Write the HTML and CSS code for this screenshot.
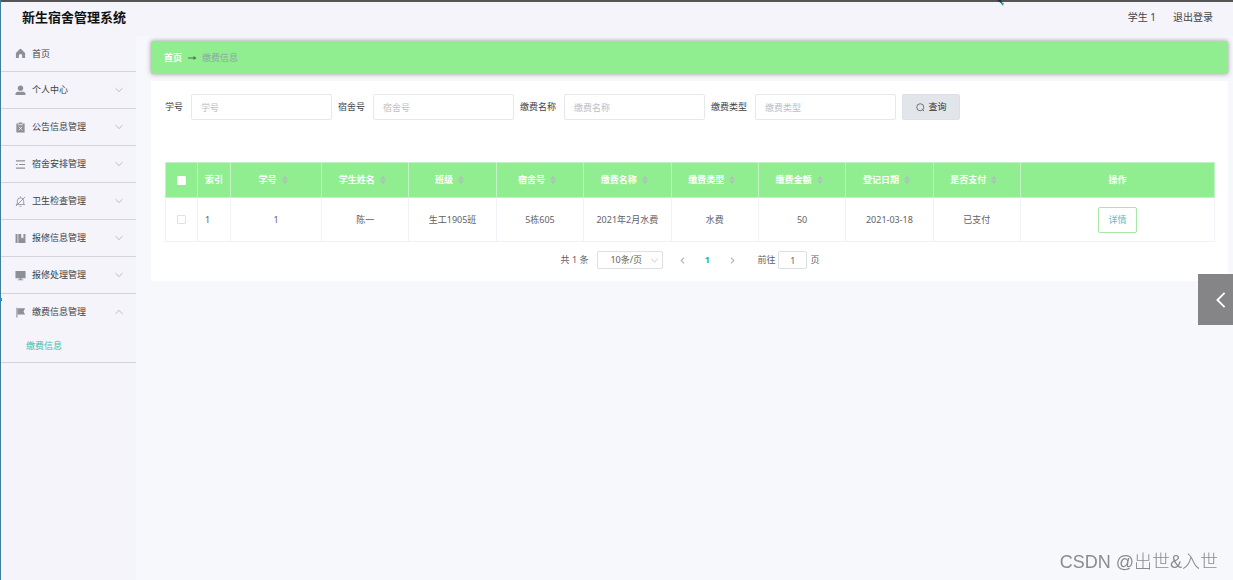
FILE: index.html
```html
<!DOCTYPE html>
<html lang="zh-CN">
<head>
<meta charset="utf-8">
<title>新生宿舍管理系统</title>
<link rel="stylesheet" href="styles.css">
</head>
<body>
<svg class="defs" aria-hidden="true">
  <symbol id="down" viewBox="0 0 10 10"><path d="M1.500 3.200 5 6.600 8.500 3.200" fill="none" stroke="currentColor"/></symbol>
  <symbol id="left" viewBox="0 0 10 10"><path d="M6.800 1.800 3.500 5l3.300 3.200" fill="none" stroke="currentColor" stroke-width="1.200"/></symbol>
  <symbol id="sort" viewBox="0 0 6 8"><path d="M3 0 6 3.600H0zM3 8 0 4.400h6z" fill="currentColor"/></symbol>
</svg>
<header class="header">
  <h1 class="title">新生宿舍管理系统</h1>
  <nav class="account"><a href="#">学生 1</a><a href="#">退出登录</a></nav>
  <svg class="cursor" viewBox="0 0 8 6"><path d="M0 0h4l2 5z" fill="#234"/><path d="M3 2l4 1-1 3z" fill="#2aa89a"/></svg>
</header>
<div class="layout">
  <aside class="sidebar">
    <ul class="menu">
      <li class="group"><a class="item" href="#"><svg class="icon" viewBox="0 0 12 12"><path d="M6 .8Q6.600.8 11 5.500V11H7.800V7.500Q6 5.800 4.200 7.500V11H1V5.500Q5.400.8 6 .8z" fill="currentColor"/></svg><span class="name">首页</span></a></li>
      <li class="group"><a class="item" href="#"><svg class="icon" viewBox="0 0 12 12"><circle cx="6" cy="3.500" r="2.900" fill="currentColor"/><path d="M.6 11V9.200Q1 7.300 3 7.300h6q2 0 2.400 1.900V11z" fill="currentColor"/></svg><span class="name">个人中心</span><svg class="arrow"><use href="#down"/></svg></a></li>
      <li class="group"><a class="item" href="#"><svg class="icon" viewBox="0 0 12 12"><path d="M1.500 1.500H4V.5h4v1h2.500v10h-9z" fill="currentColor"/><path d="M4 1.800V3h4V1.800M4 5l4 4M8 5 4 9" fill="none" stroke="#f5f4fa" stroke-width=".9"/></svg><span class="name">公告信息管理</span><svg class="arrow"><use href="#down"/></svg></a></li>
      <li class="group"><a class="item" href="#"><svg class="icon" viewBox="0 0 12 12"><path d="M1 2h10M4.500 6H11M1 10h10M1 6h2" fill="none" stroke="currentColor" stroke-width="1.300"/></svg><span class="name">宿舍安排管理</span><svg class="arrow"><use href="#down"/></svg></a></li>
      <li class="group"><a class="item" href="#"><svg class="icon" viewBox="0 0 12 12"><path d="M2.500 9V5.500Q2.500 2 6 2t3.500 3.500V9M1 9.300h10M6 .5V2M5 11.300h2M1 11 11 1" fill="none" stroke="currentColor" stroke-width=".9"/></svg><span class="name">卫生检查管理</span><svg class="arrow"><use href="#down"/></svg></a></li>
      <li class="group"><a class="item" href="#"><svg class="icon" viewBox="0 0 12 12"><path d="M.6 1h2.200v10H.6zM3.600 1h3.200v5L8 4.800 9.200 6V1h2.200v10H3.600z" fill="currentColor"/></svg><span class="name">报修信息管理</span><svg class="arrow"><use href="#down"/></svg></a></li>
      <li class="group"><a class="item" href="#"><svg class="icon" viewBox="0 0 12 12"><path d="M.5 1h11v8H7v1.300h2v1H3v-1h2V9H.5z" fill="currentColor"/></svg><span class="name">报修处理管理</span><svg class="arrow"><use href="#down"/></svg></a></li>
      <li class="group"><a class="item" href="#"><svg class="icon" viewBox="0 0 12 12"><path d="M1.500.8h1.200v10.700H1.500zM3 1.300h8L9.300 4.800 11 8.300H3z" fill="currentColor"/></svg><span class="name">缴费信息管理</span><svg class="arrow open"><use href="#down"/></svg></a>
        <a class="subitem" href="#">缴费信息</a></li>
    </ul>
  </aside>
  <main class="main">
    <nav class="crumbs"><a href="#">首页</a><svg class="to" viewBox="0 0 10 8"><path d="M1 4h7" fill="none" stroke="currentColor"/><path d="M6.500 2 9.500 4l-3 2z" fill="currentColor"/></svg><span>缴费信息</span></nav>
    <section class="card">
      <form class="search">
        <div class="field"><label for="no">学号</label><input id="no" type="text" placeholder="学号"></div>
        <div class="field"><label for="room">宿舍号</label><input id="room" type="text" placeholder="宿舍号"></div>
        <div class="field"><label for="fee">缴费名称</label><input id="fee" type="text" placeholder="缴费名称"></div>
        <div class="field"><label for="kind">缴费类型</label><input id="kind" type="text" placeholder="缴费类型"></div>
        <button class="query" type="button"><svg class="lens" viewBox="0 0 10 10"><circle cx="4.700" cy="4.700" r="3.900" fill="none" stroke="currentColor"/><path d="M7.300 7.300 9 9" stroke="currentColor"/></svg>查询</button>
      </form>
      <table class="table">
        <colgroup><col class="c-check"><col class="c-index"><col class="c-no"><col span="8"><col class="c-action"></colgroup>
        <thead><tr>
          <th><input type="checkbox" aria-label="全选"></th>
          <th class="start">索引</th>
          <th class="sortable">学号<svg class="sort"><use href="#sort"/></svg></th>
          <th class="sortable">学生姓名<svg class="sort"><use href="#sort"/></svg></th>
          <th class="sortable">班级<svg class="sort"><use href="#sort"/></svg></th>
          <th class="sortable">宿舍号<svg class="sort"><use href="#sort"/></svg></th>
          <th class="sortable">缴费名称<svg class="sort"><use href="#sort"/></svg></th>
          <th class="sortable">缴费类型<svg class="sort"><use href="#sort"/></svg></th>
          <th class="sortable">缴费金额<svg class="sort"><use href="#sort"/></svg></th>
          <th class="sortable">登记日期<svg class="sort"><use href="#sort"/></svg></th>
          <th class="sortable">是否支付<svg class="sort"><use href="#sort"/></svg></th>
          <th>操作</th>
        </tr></thead>
        <tbody><tr>
          <td><input type="checkbox" aria-label="选择"></td>
          <td class="start">1</td><td>1</td><td>陈一</td><td>生工1905班</td><td>5栋605</td><td>2021年2月水费</td><td>水费</td><td>50</td><td>2021-03-18</td><td>已支付</td>
          <td><button class="detail" type="button">详情</button></td>
        </tr></tbody>
      </table>
      <div class="pager">
        <span>共 1 条</span>
        <span class="size"><select aria-label="每页条数"><option>10条/页</option></select><svg class="caret"><use href="#down"/></svg></span>
        <span class="pages">
          <button type="button" aria-label="上一页"><svg><use href="#left"/></svg></button>
          <button type="button" class="current">1</button>
          <button type="button" aria-label="下一页"><svg class="flip"><use href="#left"/></svg></button>
        </span>
        <span class="jump"><label for="page">前往</label><input id="page" type="text" value="1"><span>页</span></span>
      </div>
    </section>
  </main>
</div>
<button class="drawer" type="button" aria-label="展开"><svg viewBox="0 0 12 20"><path d="M10 2 2 10l8 8" fill="none" stroke="#fff" stroke-width="2"/></svg></button>
<span class="marker"></span>
<div class="watermark">CSDN @出世&amp;入世</div>
</body>
</html>
```

FILE: styles.css
```css
* { box-sizing: border-box; }
body {
  margin: 0;
  min-height: 100vh;
  display: flex;
  flex-direction: column;
  border-left: 1px solid #417f9f;
  background: #f7f8fc;
  color: #606266;
  font: 9px/16px "Noto Sans", "Noto Sans CJK SC", sans-serif;
}
a { color: inherit; text-decoration: none; }
button, input, select { font: inherit; color: inherit; margin: 0; }
.defs { position: absolute; width: 0; height: 0; }

.header {
  position: relative;
  display: flex;
  justify-content: space-between;
  align-items: center;
  height: 36px;
  padding: 0 20px 5px 21px;
  border-top: 2px solid #565454;
  background: #f5f4fa;
}
.title { margin: 0; font-size: 13px; line-height: 20px; color: #111; }
.account { display: flex; gap: 17px; font-size: 10px; color: #444; }
.cursor { position: absolute; top: -2px; right: 228px; width: 8px; height: 6px; }

.layout { flex: 1; display: flex; }
.sidebar { width: 135px; flex: none; background: #f5f4fa; }
.menu { list-style: none; margin: 0; padding: 0; }
.group { border-bottom: 1px solid #d3d3d9; }
.group:first-child .item { height: 35px; }
.item { display: flex; align-items: center; height: 36px; padding: 0 12px 0 14px; color: #404246; }
.icon { width: 11px; height: 11px; margin-right: 6px; color: #8d9096; }
.name { flex: 1; }
.arrow { width: 10px; height: 10px; color: #bbbdc3; }
.open { transform: rotate(180deg); }
.subitem { display: block; height: 32px; padding: 8px 0 8px 25px; color: #3fbfae; }

.main { flex: 1; min-width: 0; padding: 5px 5px 0 15px; }
.crumbs {
  display: flex;
  align-items: center;
  gap: 5px;
  height: 33px;
  padding: 0 13px;
  border-radius: 2px;
  background: #90ee90;
  box-shadow: 0 0 5px #999;
  color: #8fa5a8;
}
.crumbs a { color: #fff; font-weight: bold; }
.to { width: 10px; height: 8px; color: #4d734d; }
.card { margin-top: 7px; padding: 13px 13px 12px 14px; background: #fff; }

.search { display: flex; gap: 6px; margin-bottom: 42px; }
.field { display: flex; align-items: center; gap: 8px; }
.field label { color: #404246; }
.field input {
  width: 141px;
  height: 26px;
  padding: 0 9px;
  border: 1px solid #e6e8ee;
  border-radius: 2px;
  background: #fff;
}
.field input::placeholder { color: #bbbec6; }
.query {
  display: flex;
  align-items: center;
  justify-content: center;
  gap: 4px;
  width: 58px;
  height: 26px;
  padding: 0;
  border: 1px solid #dcdfe6;
  border-radius: 2px;
  background: #e2e5ea;
  color: #333;
}
.lens { width: 9px; height: 9px; color: #666; }

.table { width: 100%; table-layout: fixed; border-collapse: collapse; }
.c-check { width: 32px; }
.c-index { width: 33px; }
.c-no { width: 91px; }
.c-action { width: 194px; }
.table th, .table td { padding: 0; border: 1px solid #f0f2f8; text-align: center; white-space: nowrap; }
.table th { height: 35px; background: #90ee90; color: #fff; border-color: #c2f2c6; }
.table td { height: 44px; }
.table .start { padding-left: 7px; text-align: left; }
.table .sortable { padding-right: 6px; }
.sort { width: 6px; height: 8px; margin-left: 5px; vertical-align: -1px; color: #adc0bb; }
.table input {
  appearance: none;
  display: block;
  width: 9px;
  height: 9px;
  margin: 0 auto;
  border: 1px solid #dfe2e9;
  border-radius: 1px;
  background: #fff;
}
.table th input { border-color: #fff; }
.detail {
  width: 39px;
  height: 26px;
  padding: 0;
  border: 1px solid #a5e8a7;
  border-radius: 2px;
  background: #fff;
  color: #5bbcc8;
}

.pager { display: flex; align-items: center; justify-content: center; height: 18px; margin-top: 9px; }
.size { position: relative; display: flex; margin: 0 14px 0 9px; }
.size select {
  appearance: none;
  width: 66px;
  height: 18px;
  padding: 0 12px;
  border: 1px solid #dcdfe6;
  border-radius: 2px;
  background: #fff;
}
.caret { position: absolute; right: 4px; top: 5px; width: 9px; height: 9px; color: #bbbdc3; pointer-events: none; }
.pages { display: flex; gap: 15px; margin-right: 20px; }
.pages button { display: grid; place-items: center; width: 10px; height: 18px; padding: 0; border: 0; background: none; color: #b0b3b9; }
.pages svg { width: 9px; height: 9px; }
.pages .current { color: #20b59a; font-weight: bold; }
.flip { transform: rotate(180deg); }
.jump { display: flex; align-items: center; gap: 3px; }
.jump input { width: 29px; height: 18px; padding: 0; border: 1px solid #dcdfe6; border-radius: 2px; background: #fff; text-align: center; }

.drawer {
  position: fixed;
  right: 0;
  top: 274px;
  display: flex;
  align-items: center;
  justify-content: flex-end;
  width: 35px;
  height: 51px;
  padding: 0 6px;
  border: 0;
  background: #858587;
}
.drawer svg { width: 12px; height: 18px; }
.marker { position: fixed; left: 0; top: 298px; width: 2px; height: 3px; background: #1597dc; }
.watermark {
  position: fixed;
  right: 15px;
  bottom: 6px;
  color: #8a8b8f;
  font: 300 18px/24px "Liberation Sans", "Noto Sans CJK SC", sans-serif;
}
```
